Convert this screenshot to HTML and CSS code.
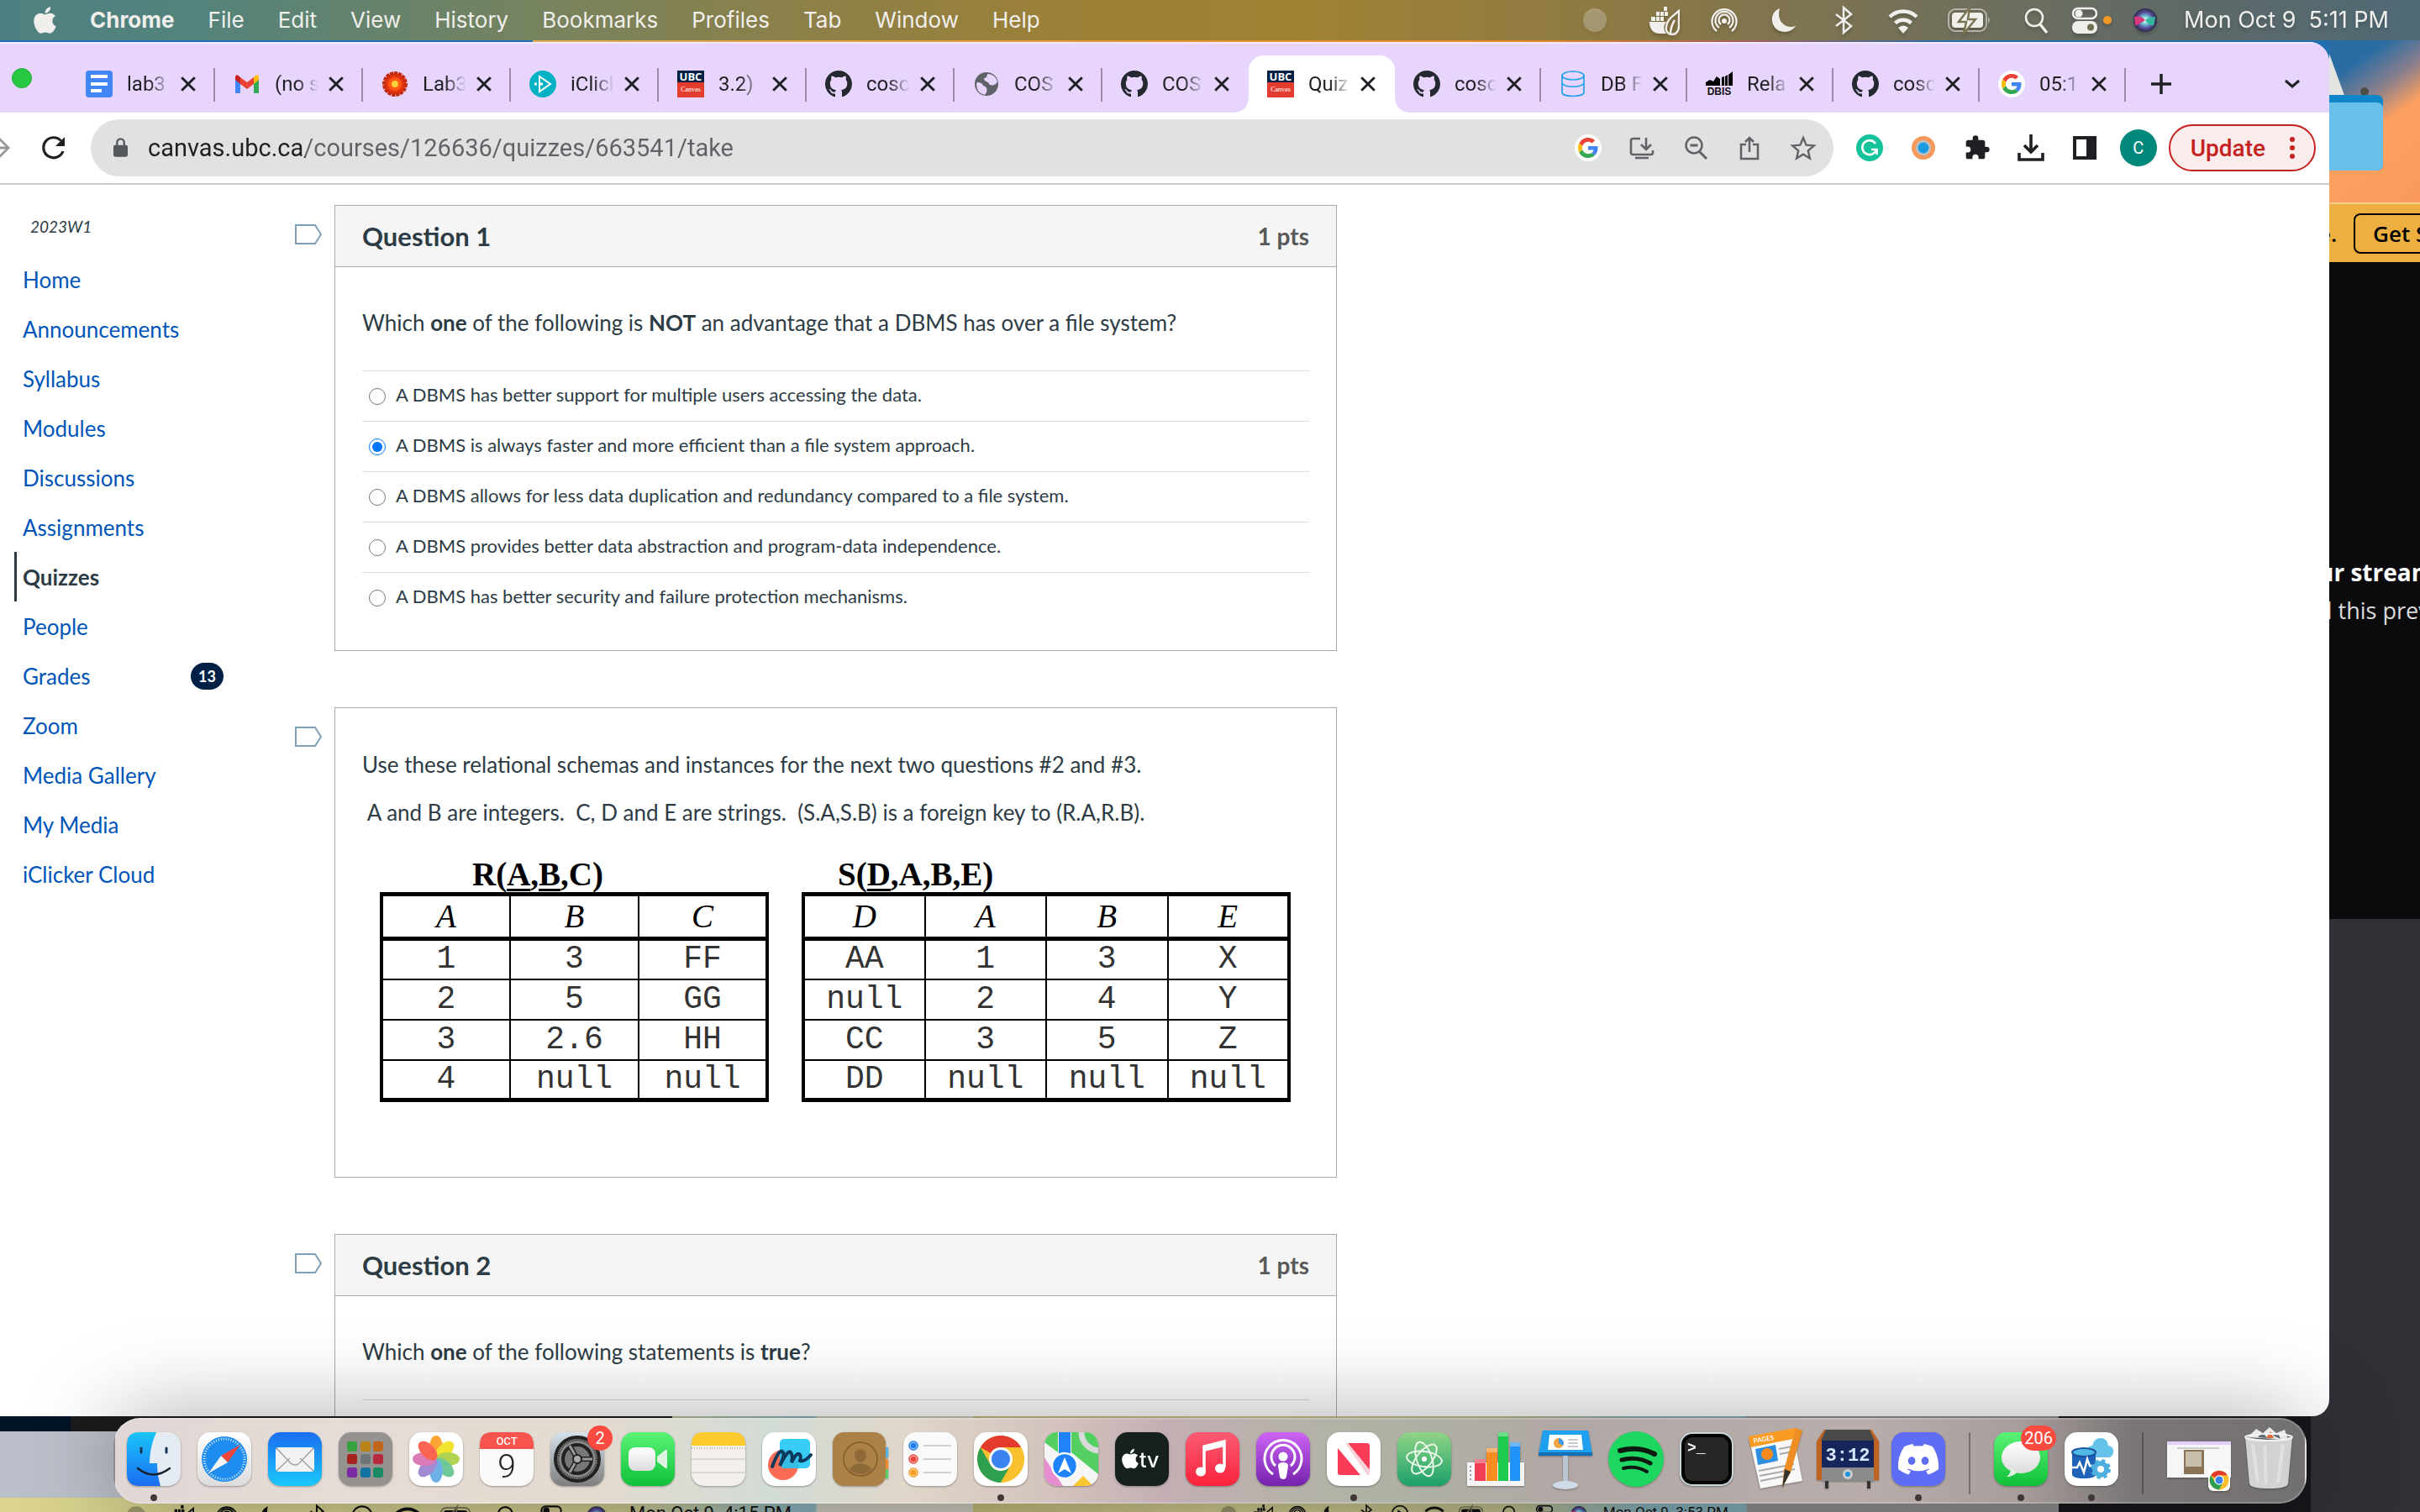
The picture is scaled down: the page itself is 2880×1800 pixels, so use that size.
FILE: index.html
```html
<!DOCTYPE html>
<html lang="en">
<head>
<meta charset="utf-8">
<title>Quiz</title>
<link rel="stylesheet" href="styles.css">
</head>
<body>
<svg class="defs" aria-hidden="true">
  <symbol id="github" viewBox="0 0 16 16"><path fill="#24292f" d="M8 0C3.58 0 0 3.58 0 8c0 3.54 2.29 6.53 5.47 7.59.4.07.55-.17.55-.38 0-.19-.01-.82-.01-1.49-2.01.37-2.53-.49-2.69-.94-.09-.23-.48-.94-.82-1.13-.28-.15-.68-.52-.01-.53.63-.01 1.08.58 1.23.82.72 1.21 1.87.87 2.33.66.07-.52.28-.87.51-1.07-1.78-.2-3.64-.89-3.64-3.95 0-.87.31-1.59.82-2.15-.08-.2-.36-1.02.08-2.12 0 0 .67-.21 2.2.82.64-.18 1.32-.27 2-.27.68 0 1.36.09 2 .27 1.53-1.04 2.2-.82 2.2-.82.44 1.1.16 1.92.08 2.12.51.56.82 1.27.82 2.15 0 3.07-1.87 3.75-3.65 3.95.29.25.54.73.54 1.48 0 1.07-.01 1.93-.01 2.2 0 .21.15.46.55.38A8.013 8.013 0 0016 8c0-4.42-3.58-8-8-8z"/></symbol>
  <symbol id="google" viewBox="0 0 64 64"><circle cx="32" cy="32" r="32" fill="#fff"/><g transform="translate(8 8)"><path fill="#ea4335" d="M24 9.5c3.54 0 6.71 1.22 9.21 3.6l6.85-6.85C35.9 2.38 30.47 0 24 0 14.62 0 6.51 5.38 2.56 13.22l7.98 6.19C12.43 13.72 17.74 9.5 24 9.5z"/><path fill="#4285f4" d="M46.98 24.55c0-1.57-.15-3.09-.38-4.55H24v9.02h12.94c-.58 2.96-2.26 5.48-4.78 7.18l7.73 6c4.51-4.18 7.09-10.36 7.09-17.65z"/><path fill="#fbbc05" d="M10.53 28.59c-.48-1.45-.76-2.99-.76-4.59s.27-3.14.76-4.59l-7.98-6.19C.92 16.46 0 20.12 0 24c0 3.88.92 7.54 2.56 10.78l7.97-6.19z"/><path fill="#34a853" d="M24 48c6.48 0 11.93-2.13 15.89-5.81l-7.73-6c-2.15 1.45-4.92 2.3-8.16 2.3-6.26 0-11.57-4.22-13.47-9.91l-7.98 6.19C6.51 42.62 14.62 48 24 48z"/></g></symbol>
  <symbol id="apple" viewBox="0 0 384 512"><path fill="currentColor" d="M318.7 268.7c-.2-36.7 16.4-64.4 50-84.8-18.8-26.9-47.2-41.7-84.7-44.6-35.5-2.8-74.3 20.7-88.5 20.7-15 0-49.4-19.7-76.4-19.7C63.3 141.2 4 184.8 4 273.5q0 39.3 14.4 81.2c12.8 36.7 59 126.7 107.2 125.2 25.2-.6 43-17.9 75.8-17.9 31.8 0 48.3 17.9 76.4 17.9 48.6-.7 90.4-82.5 102.6-119.3-65.2-30.7-61.7-90-61.7-91.9zm-56.6-164.2c27.3-32.4 24.8-61.9 24-72.5-24.1 1.4-52 16.4-67.9 34.9-17.5 19.8-27.8 44.3-25.6 71.9 26.1 2 49.9-11.4 69.5-34.3z"/></symbol>
  <symbol id="ubc" viewBox="0 0 32 32"><path fill="#002145" d="M0 0h32v14H0z"/><path fill="#e43d2f" d="M0 14h32v18H0z"/><text x="16" y="12" text-anchor="middle" font-family="Open Sans, sans-serif" font-weight="700" font-size="13" fill="#fff">UBC</text><text x="16" y="25" text-anchor="middle" font-family="Liberation Serif, serif" font-size="8" fill="#fff">Canvas</text></symbol>
  <symbol id="close" viewBox="0 0 18 18"><path d="M2 2l14 14M16 2L2 16" stroke="#1f2024" stroke-width="2.600" fill="none"/></symbol>
  <symbol id="flag" viewBox="0 0 32 26"><path d="M1 2h23l7 11-7 11H1z" fill="#fff" stroke="#7ba0b8" stroke-width="2"/></symbol>
  <symbol id="circle" viewBox="0 0 36 36"><circle cx="18" cy="18" r="14" fill="currentColor" opacity=".28"/></symbol>
  <symbol id="docker" viewBox="0 0 36 36"><path fill="currentColor" d="M0 20h20c-4 5-3 10 0 14H12C4 34 0 28 0 20zM2 14h5v5H2zM8 14h4v5H8zM13 14h4v5h-4zM8 8h4v5H8zM13 8h4v5h-4zM18 8h4v5h-4zM17 2h4v5h-4z"/><path fill="none" stroke="currentColor" stroke-width="2.4" d="M35 7v18c0 7-4 10-8 10-5 0-8-4-7-9 1-9 7-12 15-19zM25 35c0-7 1-11 5-17"/></symbol>
  <symbol id="airdrop" viewBox="0 0 36 36"><g fill="none" stroke="currentColor" stroke-width="2.3"><path d="M9 31a14.500 14.500 0 1 1 18 0M12 27a10.500 10.500 0 1 1 12 0M14 23a6.500 6.500 0 1 1 8 0"/></g><circle cx="18" cy="19" r="3" fill="currentColor"/></symbol>
  <symbol id="moon" viewBox="0 0 36 36"><path fill="currentColor" d="M13 4C5 7 2 15 5 23c5 11 20 12 27 2-13 4-23-6-19-21z"/></symbol>
  <symbol id="bluetooth" viewBox="0 0 36 36"><path fill="none" stroke="currentColor" stroke-width="2.500" d="M9 11l18 14-9 8V3l9 8L9 25"/></symbol>
  <symbol id="wifi" viewBox="0 0 36 36"><path fill="none" stroke="currentColor" stroke-width="4.500" d="M2 14a23 23 0 0 1 32 0M8.500 21.500a14 14 0 0 1 19 0"/><path fill="currentColor" d="M12 27q6-5 12 0l-6 7z"/></symbol>
  <symbol id="battery" viewBox="0 0 52 36"><rect x="1" y="5" width="45" height="26" rx="8" fill="none" stroke="currentColor" stroke-width="2" opacity=".55"/><path fill="currentColor" d="M48 14q4 4 0 8z" opacity=".55"/><rect x="5" y="9" width="37" height="18" rx="4" fill="currentColor"/><path d="M26 3L13 20h9l-3 14 14-17h-9z" fill="currentColor" stroke="#7b7452" stroke-width="2.500"/></symbol>
  <symbol id="search" viewBox="0 0 36 36"><circle cx="16" cy="15" r="10" fill="none" stroke="currentColor" stroke-width="2.600"/><path d="M23 23l8 10" stroke="currentColor" stroke-width="3.500"/></symbol>
  <symbol id="control" viewBox="0 0 36 36"><rect x="4" y="4" width="28" height="12" rx="6" fill="none" stroke="currentColor" stroke-width="2.500"/><circle cx="11" cy="10" r="4.500" fill="currentColor"/><rect x="3" y="19" width="30" height="15" rx="7" fill="currentColor"/><circle cx="25" cy="26.500" r="4" fill="#6f6c58"/></symbol>
  <symbol id="play" viewBox="0 0 36 36"><circle cx="18" cy="18" r="14" fill="none" stroke="currentColor" stroke-width="2.500"/><path d="M14 11l11 7-11 7z" fill="currentColor"/></symbol>
  <radialGradient id="siriGrad"><stop offset="0" stop-color="#fff"/><stop offset=".35" stop-color="#6fc4d8"/><stop offset=".7" stop-color="#5a4a9a"/><stop offset="1" stop-color="#2b2b45"/></radialGradient>
  <symbol id="siri" viewBox="0 0 36 36"><circle cx="18" cy="18" r="14" fill="url(#siriGrad)"/><path d="M5 14q8-2 13 4Q9 24 6 24z" fill="#d83a7c"/><path d="M30 14q-6 0-12 4 6 8 10 6z" fill="#35b79e"/></symbol>
  <symbol id="chromelogo" viewBox="0 0 64 64"><circle cx="32" cy="32" r="28" fill="#fbc02d"/><path d="M32 32L7.800 18A28 28 0 0 1 56.200 18z" fill="#e33b2e"/><path d="M7.800 18A28 28 0 0 0 32 60L44 39 20 39z" fill="#2e9e4f"/><path d="M32 18h24.200A28 28 0 0 1 32 60L44 39z" fill="#fbc02d"/><circle cx="32" cy="32" r="14" fill="#fff"/><circle cx="32" cy="32" r="11" fill="#3b83ef"/></symbol>
  <linearGradient id="gBlue" x2="0" y2="1"><stop stop-color="#1b6df0"/><stop offset="1" stop-color="#1ac8fb"/></linearGradient>
  <linearGradient id="gBlue2" x2="0" y2="1"><stop stop-color="#19c5f8"/><stop offset="1" stop-color="#1a6df2"/></linearGradient>
  <linearGradient id="gGreen" x2="0" y2="1"><stop stop-color="#5bf377"/><stop offset="1" stop-color="#10c038"/></linearGradient>
  <linearGradient id="gWhite" x2="0" y2="1"><stop stop-color="#fff"/><stop offset="1" stop-color="#dcdcdc"/></linearGradient>
  <linearGradient id="gRed" x2="0" y2="1"><stop stop-color="#fb5c74"/><stop offset="1" stop-color="#fa233b"/></linearGradient>
  <linearGradient id="gPurple" x2="0" y2="1"><stop stop-color="#ce64f5"/><stop offset="1" stop-color="#7422ad"/></linearGradient>
  <linearGradient id="gAtom" x2="0" y2="1"><stop stop-color="#92d488"/><stop offset="1" stop-color="#1aa06a"/></linearGradient>
  <linearGradient id="gGray" x2="0" y2="1"><stop stop-color="#d5e2ea"/><stop offset="1" stop-color="#7e7e7e"/></linearGradient>
</svg>

<div class="desktop">
  <div class="wallpaper" aria-hidden="true">
    <svg class="folder" viewBox="0 0 70 180"><path d="M0 12l20 55H0z" fill="#e4e4e0"/><circle cx="42" cy="57" r="5" fill="#4d4d48"/><path d="M0 61h56q8 0 8 8v74q0 8-8 8H0z" fill="#0f86c9"/><path d="M0 70h56q8 0 8 8v65q0 8-8 8H0z" fill="#67bfea"/></svg>
  </div>
  <div class="stream">
    <div class="stream-bar"><span>e.</span><button type="button">Get S</button></div>
    <div class="stream-body"><strong>ur stream</strong><span>d this prev</span></div>
  </div>
  <div class="preview preview-left">
    <div class="mini-bar">
      <svg><use href="#circle"/></svg><svg><use href="#docker"/></svg><svg><use href="#airdrop"/></svg><svg><use href="#moon"/></svg><svg><use href="#bluetooth"/></svg><svg><use href="#play"/></svg><svg><use href="#wifi"/></svg><svg class="wide"><use href="#battery"/></svg><svg><use href="#search"/></svg><svg><use href="#control"/></svg><svg><use href="#siri"/></svg><span>Mon Oct 9&nbsp; 4:15 PM</span>
    </div>
  </div>
  <div class="preview preview-right">
    <div class="mini-bar small">
      <svg><use href="#circle"/></svg><svg><use href="#docker"/></svg><svg><use href="#airdrop"/></svg><svg><use href="#moon"/></svg><svg><use href="#bluetooth"/></svg><svg><use href="#play"/></svg><svg><use href="#wifi"/></svg><svg class="wide"><use href="#battery"/></svg><svg><use href="#search"/></svg><svg><use href="#control"/></svg><svg><use href="#siri"/></svg><span>Mon Oct 9&nbsp; 3:53 PM</span>
    </div>
  </div>

  <header class="menubar">
    <nav class="menus">
      <svg class="apple"><use href="#apple"/></svg>
      <button type="button"><b>Chrome</b></button><button type="button">File</button><button type="button">Edit</button><button type="button">View</button><button type="button">History</button><button type="button">Bookmarks</button><button type="button">Profiles</button><button type="button">Tab</button><button type="button">Window</button><button type="button">Help</button>
    </nav>
    <div class="status">
      <svg class="idle"><use href="#circle"/></svg><svg><use href="#docker"/></svg><svg><use href="#airdrop"/></svg><svg><use href="#moon"/></svg><svg><use href="#bluetooth"/></svg><svg><use href="#wifi"/></svg><svg class="wide"><use href="#battery"/></svg><svg><use href="#search"/></svg><span class="cc"><svg><use href="#control"/></svg><i></i></span><svg><use href="#siri"/></svg>
      <time>Mon Oct 9&nbsp; 5:11 PM</time>
    </div>
  </header>

  <main class="window">
    <div class="tabs">
      <span class="zoom-light"></span>
      <div class="tab"><svg class="fav" viewBox="0 0 32 32"><rect width="32" height="32" rx="4" fill="#4285f4"/><path d="M6 7h20M6 16h20M6 24h13" stroke="#fff" stroke-width="4"/></svg><span>lab3</span><button type="button" aria-label="Close"><svg><use href="#close"/></svg></button></div>
      <div class="tab"><svg class="fav" viewBox="0 0 32 32"><path d="M2 27V10l6 4v13z" fill="#4285f4"/><path d="M30 27V10l-6 4v13z" fill="#34a853"/><path d="M24 8l3-2.500Q30 4 30 9v2l-6 5z" fill="#fbbc04"/><path d="M8 8L5 5.500Q2 4 2 9v2l6 5z" fill="#c5221f"/><path d="M8 8l8 6 8-6v8l-8 6-8-6z" fill="#ea4335"/></svg><span>(no s</span><button type="button" aria-label="Close"><svg><use href="#close"/></svg></button></div>
      <div class="tab"><svg class="fav" viewBox="0 0 32 32"><circle cx="16" cy="16" r="13" fill="#e3340f" stroke="#c22a10" stroke-width="4" stroke-dasharray="4 1"/><circle cx="16" cy="16" r="8" fill="#ff5a14"/><circle cx="16" cy="16" r="4" fill="#ffd23a"/></svg><span>Lab3</span><button type="button" aria-label="Close"><svg><use href="#close"/></svg></button></div>
      <div class="tab"><svg class="fav" viewBox="0 0 32 32"><circle cx="16" cy="16" r="16" fill="#06b1c4"/><path d="M12 7l13 9-13 9z" fill="none" stroke="#fff" stroke-width="2"/><path d="M6 16h3M12 16h4" stroke="#fff" stroke-width="3"/></svg><span>iClick</span><button type="button" aria-label="Close"><svg><use href="#close"/></svg></button></div>
      <div class="tab"><svg class="fav"><use href="#ubc"/></svg><span>3.2) </span><button type="button" aria-label="Close"><svg><use href="#close"/></svg></button></div>
      <div class="tab"><svg class="fav"><use href="#github"/></svg><span>cosc</span><button type="button" aria-label="Close"><svg><use href="#close"/></svg></button></div>
      <div class="tab"><svg class="fav" viewBox="0 0 32 32"><circle cx="16" cy="16" r="14" fill="#5f6368"/><path d="M5 14q6 0 7 4 6 1 4 8l-2 3Q4 27 4 16zM17 4q0 5-4 5 0 4 5 5 2 5 7 3 3-1 4-4-3-9-12-9z" fill="#e8d5fe"/></svg><span>COS</span><button type="button" aria-label="Close"><svg><use href="#close"/></svg></button></div>
      <div class="tab before"><svg class="fav"><use href="#github"/></svg><span>COS</span><button type="button" aria-label="Close"><svg><use href="#close"/></svg></button></div>
      <div class="tab active"><svg class="fav"><use href="#ubc"/></svg><span>Quiz</span><button type="button" aria-label="Close"><svg><use href="#close"/></svg></button></div>
      <div class="tab"><svg class="fav"><use href="#github"/></svg><span>cosc</span><button type="button" aria-label="Close"><svg><use href="#close"/></svg></button></div>
      <div class="tab"><svg class="fav" viewBox="0 0 32 32"><g fill="none" stroke="#1fa2ea" stroke-width="1.700"><ellipse cx="16" cy="6" rx="13" ry="5"/><path d="M3 6v20c0 6 26 6 26 0V6M3 14c0 7 26 7 26 0"/></g></svg><span>DB F</span><button type="button" aria-label="Close"><svg><use href="#close"/></svg></button></div>
      <div class="tab"><svg class="fav" viewBox="0 0 32 32"><path d="M0 18v-4l5-3 4 2 4-6 4 3v8zM19 18V8l3-1v11zM23 18V7l3-2v13zM27 18V5l5-4v17z" fill="#000"/><text x="16" y="29" text-anchor="middle" font-family="Liberation Sans, sans-serif" font-weight="700" font-size="12" fill="#111">DBIS</text></svg><span>Rela</span><button type="button" aria-label="Close"><svg><use href="#close"/></svg></button></div>
      <div class="tab"><svg class="fav"><use href="#github"/></svg><span>cosc</span><button type="button" aria-label="Close"><svg><use href="#close"/></svg></button></div>
      <div class="tab"><svg class="fav"><use href="#google"/></svg><span>05:1</span><button type="button" aria-label="Close"><svg><use href="#close"/></svg></button></div>
      <button class="new-tab" type="button" aria-label="New tab"><svg viewBox="0 0 24 24"><path d="M12 0v24M0 12h24" stroke="#1f2024" stroke-width="3.500"/></svg></button>
      <button class="tab-search" type="button" aria-label="Search tabs"><svg viewBox="0 0 24 24"><path d="M4 8l8 7 8-7" fill="none" stroke="#1f2024" stroke-width="3"/></svg></button>
    </div>

    <div class="toolbar">
      <button type="button" class="forward" aria-label="Forward"><svg viewBox="0 0 28 28"><path d="M0 14h24M13 2l12 12-12 12" fill="none" stroke="#9a9a9a" stroke-width="3"/></svg></button>
      <button type="button" class="reload" aria-label="Reload"><svg viewBox="0 0 28 28"><path d="M25 18A12 12 0 1 1 22.500 5.500" fill="none" stroke="#1f2024" stroke-width="3.200"/><path d="M27 1v11H16z" fill="#1f2024"/></svg></button>
      <form class="omnibox">
        <svg class="lock" viewBox="0 0 16 22"><rect y="8" width="16" height="13" rx="2" fill="#55585c"/><path d="M4 9V5a4 4 0 0 1 8 0v4" fill="none" stroke="#55585c" stroke-width="2.200"/></svg>
        <input type="text" aria-label="Address" value="canvas.ubc.ca/courses/126636/quizzes/663541/take">
        <svg><use href="#google"/></svg>
        <svg viewBox="0 0 32 32"><path d="M14 5H5.500Q3 5 3 7.500v14Q3 24 5.500 24h21q2.500 0 2.500-2.500V19M8 28h16" fill="none" stroke="#5f6368" stroke-width="2.600"/><path d="M21 4v13M15 12l6 6 6-6" fill="none" stroke="#5f6368" stroke-width="2.600"/></svg>
        <svg viewBox="0 0 32 32"><circle cx="14" cy="13" r="9.500" fill="none" stroke="#5f6368" stroke-width="2.500"/><path d="M9.500 13h9M20 20l9 9" stroke="#5f6368" stroke-width="3"/></svg>
        <svg viewBox="0 0 32 32"><path d="M12 12H6v17h20V12h-6M16 21V4M11 9l5-5 5 5" fill="none" stroke="#5f6368" stroke-width="2.500"/></svg>
        <svg viewBox="0 0 32 32"><path d="M16 4l3.600 8.600 9.200.8-7 6 2.100 9.100L16 23.700l-7.900 4.800 2.100-9.100-7-6 9.200-.8z" fill="none" stroke="#5f6368" stroke-width="2.400"/></svg>
      </form>
      <div class="extensions">
        <svg viewBox="0 0 32 32"><circle cx="16" cy="16" r="16" fill="#15c39a"/><path d="M23 11a8.500 8.500 0 1 0 1 7h-6M24.500 17v7" fill="none" stroke="#fff" stroke-width="2.600"/></svg>
        <svg viewBox="0 0 32 32"><circle cx="16" cy="16" r="14" fill="#f59a5b"/><circle cx="16" cy="16" r="9" fill="#b9c3cc"/><circle cx="16" cy="16" r="6.500" fill="#1d9be0"/></svg>
        <svg viewBox="0 0 24 24"><path fill="#1f2024" d="M20.500 11H19V7a2 2 0 0 0-2-2h-4V3.500a2.500 2.500 0 0 0-5 0V5H4a2 2 0 0 0-2 2v3.800h1.500a2.700 2.700 0 0 1 0 5.400H2V20a2 2 0 0 0 2 2h3.800v-1.500a2.700 2.700 0 0 1 5.400 0V22H17a2 2 0 0 0 2-2v-4h1.500a2.500 2.500 0 0 0 0-5z"/></svg>
        <svg viewBox="0 0 32 32"><path d="M16 0v21M8 13l8 8 8-8M2 22v8h28v-8" fill="none" stroke="#1f2024" stroke-width="3.600"/></svg>
        <svg viewBox="0 0 32 32"><path fill="#1f2024" fill-rule="evenodd" d="M2 2h28v28H2zM6 6v20h12V6z"/></svg>
        <button type="button" class="avatar">C</button>
        <button type="button" class="update">Update<svg viewBox="0 0 8 28"><circle cx="4" cy="4" r="3"/><circle cx="4" cy="14" r="3"/><circle cx="4" cy="24" r="3"/></svg></button>
      </div>
    </div>

    <div class="page">
      <aside class="sidebar">
        <p class="term">2023W1</p>
        <nav>
          <a href="#">Home</a><a href="#">Announcements</a><a href="#">Syllabus</a><a href="#">Modules</a><a href="#">Discussions</a><a href="#">Assignments</a><a href="#" class="current">Quizzes</a><a href="#">People</a><a href="#">Grades<span class="badge">13</span></a><a href="#">Zoom</a><a href="#">Media Gallery</a><a href="#">My Media</a><a href="#">iClicker Cloud</a>
        </nav>
      </aside>
      <div class="questions">
        <section class="row">
          <svg class="flag"><use href="#flag"/></svg>
          <div class="card">
            <div class="card-head"><h2>Question 1</h2><span>1 pts</span></div>
            <div class="card-body">
              <p>Which <b>one</b> of the following is <b>NOT</b> an advantage that a DBMS has over a file system?</p>
              <div class="answers">
                <label><input type="radio" name="q1">A DBMS has better support for multiple users accessing the data.</label>
                <label><input type="radio" name="q1" checked>A DBMS is always faster and more efficient than a file system approach.</label>
                <label><input type="radio" name="q1">A DBMS allows for less data duplication and redundancy compared to a file system.</label>
                <label><input type="radio" name="q1">A DBMS provides better data abstraction and program-data independence.</label>
                <label><input type="radio" name="q1">A DBMS has better security and failure protection mechanisms.</label>
              </div>
            </div>
          </div>
        </section>
        <section class="row">
          <svg class="flag"><use href="#flag"/></svg>
          <div class="card">
            <div class="card-body text">
              <p>Use these relational schemas and instances for the next two questions #2 and #3.</p>
              <p>&nbsp;A and B are integers.&nbsp; C, D and E are strings.&nbsp; (S.A,S.B) is a foreign key to (R.A,R.B).</p>
              <div class="relations">
                <table class="rel-r">
                  <caption>R(<u>A</u>,<u>B</u>,C)</caption>
                  <thead><tr><th>A</th><th>B</th><th>C</th></tr></thead>
                  <tbody><tr><td>1</td><td>3</td><td>FF</td></tr><tr><td>2</td><td>5</td><td>GG</td></tr><tr><td>3</td><td>2.6</td><td>HH</td></tr><tr><td>4</td><td>null</td><td>null</td></tr></tbody>
                </table>
                <table class="rel-s">
                  <caption>S(<u>D</u>,A,B,E)</caption>
                  <thead><tr><th>D</th><th>A</th><th>B</th><th>E</th></tr></thead>
                  <tbody><tr><td>AA</td><td>1</td><td>3</td><td>X</td></tr><tr><td>null</td><td>2</td><td>4</td><td>Y</td></tr><tr><td>CC</td><td>3</td><td>5</td><td>Z</td></tr><tr><td>DD</td><td>null</td><td>null</td><td>null</td></tr></tbody>
                </table>
              </div>
            </div>
          </div>
        </section>
        <section class="row">
          <svg class="flag"><use href="#flag"/></svg>
          <div class="card">
            <div class="card-head"><h2>Question 2</h2><span>1 pts</span></div>
            <div class="card-body">
              <p>Which <b>one</b> of the following statements is <b>true</b>?</p>
              <div class="answers"><label></label></div>
            </div>
          </div>
        </section>
      </div>
    </div>
  </main>

  <footer class="dock">
    <div class="app running"><svg viewBox="0 0 64 64"><rect width="64" height="64" rx="15" fill="#e4ebf3"/><path d="M15 0h20q-8 18-8 37h9q0 14 4 27H15Q0 64 0 49V15Q0 0 15 0z" fill="url(#gBlue2)"/><path d="M17 19v5M47 19v5" stroke="#17324f" stroke-width="3" stroke-linecap="round"/><path d="M13 43q18 15 38 0" fill="none" stroke="#17212f" stroke-width="2.500" stroke-linecap="round"/></svg></div>
    <div class="app"><svg viewBox="0 0 64 64"><rect width="64" height="64" rx="15" fill="url(#gWhite)"/><circle cx="32" cy="32" r="27" fill="#1f8cf0"/><circle cx="32" cy="32" r="24" fill="none" stroke="#d8ecfb" stroke-width="3" stroke-dasharray="1 2"/><path d="M51 15L36 36l-8-8z" fill="#f0453a"/><path d="M13 49l15-21 8 8z" fill="#f4f4f4"/></svg></div>
    <div class="app"><svg viewBox="0 0 64 64"><rect width="64" height="64" rx="15" fill="url(#gBlue)"/><rect x="9" y="18" width="46" height="29" rx="4" fill="#f2f2f2"/><path d="M10 46l16-15M54 46L38 31M10 19l17 18q5 4 10 0l17-18" fill="none" stroke="#a3a3a3" stroke-width="1.500"/></svg></div>
    <div class="app"><svg viewBox="0 0 64 64"><rect width="64" height="64" rx="15" fill="#969290"/><g><rect x="10" y="11" width="12" height="12" rx="3" fill="#36a23d"/><rect x="26" y="11" width="12" height="12" rx="3" fill="#b88416"/><rect x="41" y="11" width="12" height="12" rx="3" fill="#c2671a"/><rect x="10" y="26" width="12" height="12" rx="3" fill="#a5241f"/><rect x="26" y="26" width="12" height="12" rx="3" fill="#6d7577"/><rect x="41" y="26" width="12" height="12" rx="3" fill="#b7293e"/><rect x="10" y="42" width="12" height="12" rx="3" fill="#7a2ba1"/><rect x="26" y="42" width="12" height="12" rx="3" fill="#1473a3"/><rect x="41" y="42" width="12" height="12" rx="3" fill="#1a8a63"/></g></svg></div>
    <div class="app"><svg viewBox="0 0 64 64"><rect width="64" height="64" rx="15" fill="#fff"/><g opacity=".9"><ellipse cx="32" cy="18" rx="8" ry="14" fill="#fb9d1c"/><ellipse cx="32" cy="18" rx="8" ry="14" fill="#f2e01b" transform="rotate(45 32 32)"/><ellipse cx="32" cy="18" rx="8" ry="14" fill="#a8cf3f" transform="rotate(90 32 32)"/><ellipse cx="32" cy="18" rx="8" ry="14" fill="#5fc48c" transform="rotate(135 32 32)"/><ellipse cx="32" cy="18" rx="8" ry="14" fill="#5fa8e6" transform="rotate(180 32 32)"/><ellipse cx="32" cy="18" rx="8" ry="14" fill="#9a7fd0" transform="rotate(225 32 32)"/><ellipse cx="32" cy="18" rx="8" ry="14" fill="#d86db0" transform="rotate(270 32 32)"/><ellipse cx="32" cy="18" rx="8" ry="14" fill="#fb5340" transform="rotate(315 32 32)"/></g></svg></div>
    <div class="app"><svg viewBox="0 0 64 64"><rect width="64" height="64" rx="15" fill="#fbfaf8"/><path d="M0 20v-5Q0 0 15 0h34q15 0 15 15v5z" fill="#f6544c"/><text x="32" y="15" text-anchor="middle" font-family="Roboto, sans-serif" font-weight="500" font-size="13" fill="#fff">OCT</text><text x="32" y="54" text-anchor="middle" font-family="Roboto, sans-serif" font-weight="300" font-size="39" fill="#222">9</text></svg></div>
    <div class="app"><svg viewBox="0 0 64 64"><rect width="64" height="64" rx="15" fill="url(#gGray)"/><circle cx="32" cy="32" r="26" fill="#9b9b9b" stroke="#222" stroke-width="4"/><circle cx="32" cy="32" r="23" fill="#8a8a8a" stroke="#333" stroke-width="3" stroke-dasharray="1 1"/><circle cx="32" cy="32" r="17" fill="#777" stroke="#222" stroke-width="4"/><path d="M32 32h18M32 32l-9-16M32 32l-9 16" stroke="#222" stroke-width="6"/><path d="M32 32h18M32 32l-9-16M32 32l-9 16" stroke="#999" stroke-width="3"/><circle cx="32" cy="32" r="5" fill="#aaa" stroke="#222" stroke-width="2"/></svg><span class="count">2</span></div>
    <div class="app"><svg viewBox="0 0 64 64"><rect width="64" height="64" rx="15" fill="url(#gGreen)"/><rect x="9" y="18" width="32" height="28" rx="8" fill="url(#gWhite)"/><path d="M43 29l10-8q2-1 2 2v18q0 3-2 2l-10-8z" fill="#dff3e2"/></svg></div>
    <div class="app"><svg viewBox="0 0 64 64"><rect width="64" height="64" rx="15" fill="#f3f0ec"/><path d="M0 16v-1Q0 0 15 0h34q15 0 15 15v1z" fill="#fdcb2e"/><path d="M0 19h64" stroke="#aaa" stroke-width="1.500" stroke-dasharray="1 2"/><path d="M0 32h64M0 48h64" stroke="#cfcfcf" stroke-width="1.500"/></svg></div>
    <div class="app"><svg viewBox="0 0 64 64"><rect width="64" height="64" rx="15" fill="#fff"/><circle cx="25" cy="39" r="18" fill="#fb6b55"/><rect x="21" y="8" width="36" height="35" rx="5" fill="#22c8f5" opacity=".9"/><path d="M12 41Q20 20 24 23T21 40Q31 20 34 24T35 36Q41 24 44 26T45 34Q50 36 58 27" fill="none" stroke="#0b3a5c" stroke-width="4" stroke-linecap="round"/></svg></div>
    <div class="app"><svg viewBox="0 0 64 64"><path d="M58 18h8v12h-8z" fill="#4fb2e8"/><path d="M58 32h8v12h-8z" fill="#f08a2a"/><path d="M58 44h8v11h-8z" fill="#5bd06a"/><rect width="63" height="64" rx="14" fill="#ab8148"/><circle cx="33" cy="32" r="20" fill="none" stroke="#7d5c2d" stroke-width="1.500"/><ellipse cx="33" cy="28" rx="7" ry="8" fill="#8d6a38"/><path d="M19 44q14-14 28 0-14 12-28 0z" fill="#8d6a38"/></svg></div>
    <div class="app"><svg viewBox="0 0 64 64"><rect width="64" height="64" rx="15" fill="#fbfafa"/><g fill="none" stroke-width="1.500"><circle cx="12" cy="16" r="5" stroke="#1a7cf5"/><circle cx="12" cy="32" r="5" stroke="#f5433a"/><circle cx="12" cy="48" r="5" stroke="#fb9a1c"/></g><circle cx="12" cy="16" r="3.500" fill="#1a7cf5"/><circle cx="12" cy="32" r="3.500" fill="#f5433a"/><circle cx="12" cy="48" r="3.500" fill="#fb9a1c"/><path d="M24 16h33M24 32h33M24 48h33" stroke="#c4c4c6" stroke-width="1.500"/></svg></div>
    <div class="app running"><svg viewBox="0 0 64 64"><rect width="64" height="64" rx="15" fill="#fff"/><use href="#chromelogo"/></svg></div>
    <div class="app"><svg viewBox="0 0 64 64"><clipPath id="mapClip"><rect width="64" height="64" rx="15"/></clipPath><g clip-path="url(#mapClip)"><path fill="#f5f5f5" d="M0 0h64v64H0z"/><path d="M32 0h32v50L32 24z" fill="#54cf62"/><path d="M0 12V0h16v24z" fill="#54cf62"/><path d="M0 30l22 34H0z" fill="#e88ed0"/><path d="M34 64l12-12 12 12z" fill="#fcc62e"/><path d="M17 0h14v32H17z" fill="#1f84fb"/><circle cx="66" cy="0" r="22" fill="none" stroke="#dadada" stroke-width="7"/></g><circle cx="24" cy="40" r="15" fill="#1f84fb" stroke="#fff" stroke-width="2.500"/><path d="M24 30l8 19-8-5-8 5z" fill="#fff"/></svg></div>
    <div class="app tv"><svg viewBox="0 0 64 64"><rect width="64" height="64" rx="15" fill="#16201f"/><svg x="8" y="18" width="20" height="27" color="#fff"><use href="#apple"/></svg><text x="29" y="42" font-family="Inter, sans-serif" font-weight="500" font-size="25" fill="#fff">tv</text></svg></div>
    <div class="app"><svg viewBox="0 0 64 64"><rect width="64" height="64" rx="15" fill="url(#gRed)"/><path d="M22 46V17l24-6v31" fill="none" stroke="#fff" stroke-width="3.500"/><path d="M22 16l24-6v7l-24 6z" fill="#fff"/><ellipse cx="18" cy="47" rx="6" ry="5.500" fill="#fff"/><ellipse cx="41" cy="43" rx="6" ry="5.500" fill="#fff"/></svg></div>
    <div class="app"><svg viewBox="0 0 64 64"><rect width="64" height="64" rx="15" fill="url(#gPurple)"/><g fill="none" stroke="#fff" stroke-width="3"><path d="M20 50a22 22 0 1 1 24 0M23 40a14 14 0 1 1 18 0"/></g><circle cx="32" cy="29" r="5.500" fill="#fff"/><path d="M26 40q0-4 6-4t6 4l-2 13q-1 3-4 3t-4-3z" fill="#fff"/></svg></div>
    <div class="app running"><svg viewBox="0 0 64 64"><rect width="64" height="64" rx="15" fill="#fff"/><rect x="13" y="13" width="38" height="38" rx="3" fill="#fa3c58"/><path d="M13 13h12l26 32v6H40L13 19z" fill="#fff"/><path d="M22 13h3l26 32v6h-3z" fill="#fbd2d8"/></svg></div>
    <div class="app"><svg viewBox="0 0 64 64"><rect width="64" height="64" rx="15" fill="url(#gAtom)"/><g fill="none" stroke="#e9f7e8" stroke-width="2"><ellipse cx="32" cy="32" rx="9" ry="21" transform="rotate(-18 32 32)"/><ellipse cx="32" cy="32" rx="9" ry="21" transform="rotate(38 32 32)"/><ellipse cx="32" cy="32" rx="9" ry="21" transform="rotate(98 32 32)"/></g><circle cx="32" cy="32" r="3" fill="#fff"/></svg></div>
    <div class="app"><svg viewBox="0 0 64 64"><path d="M-1 36h68v28H-1z" fill="#f6f6f6"/><rect x="8" y="32" width="13" height="26" fill="#f03e55"/><rect x="22" y="19" width="13" height="39" fill="#fb8d22"/><rect x="36" y="0" width="12" height="58" fill="#1ecb4c"/><rect x="50" y="12" width="12" height="46" fill="#1f93f8"/><path d="M8 32h13v5H8zM22 19h13v5H22zM36 0h12v5H36zM50 12h12v5H50z" fill="#fff" opacity=".35"/><path d="M3 40v20" stroke="#999" stroke-width="2" stroke-dasharray="2 3"/></svg></div>
    <div class="app"><svg viewBox="0 0 64 64"><path d="M29 28h6v34h-6z" fill="#b9c6d2"/><ellipse cx="32" cy="63" rx="15" ry="5" fill="#cfdbe6"/><path d="M5-2h54l5 28H0z" fill="#1f9ff0"/><path d="M0 24h64v4H0z" fill="#1470b8"/><path d="M13 3h38l2 18H11z" fill="#fff"/><circle cx="24" cy="13" r="6" fill="#f5a33a"/><path d="M24 13v-6a6 6 0 0 1 5 9z" fill="#3a9cf0"/><path d="M35 9h12M35 13h12M35 17h12" stroke="#bbb" stroke-width="1.500"/></svg></div>
    <div class="app"><svg viewBox="0 0 64 64"><circle cx="32" cy="32" r="33" fill="#1ed760"/><g fill="none" stroke="#0c1a10" stroke-linecap="round"><path d="M13 22q22-6 41 4" stroke-width="6"/><path d="M15 33q18-5 34 4" stroke-width="5"/><path d="M17 43q15-4 28 4" stroke-width="4"/></g></svg></div>
    <div class="app"><svg viewBox="0 0 64 64"><rect width="64" height="64" rx="15" fill="#c9d8de"/><rect x="2" y="2" width="60" height="60" rx="13" fill="#000"/><rect x="6" y="6" width="52" height="52" rx="9" fill="#262626"/><text x="9" y="24" font-family="Liberation Mono, monospace" font-weight="700" font-size="18" fill="#fff">&gt;_</text></svg></div>
    <div class="app"><svg viewBox="0 0 64 64"><path d="M-2 5L50-4l12 62-50 9z" fill="#f8f8f8"/><path d="M-2 5L54-5l2 12L0 18z" fill="#fb9a20"/><text x="4" y="13" transform="rotate(-9 4 13)" font-family="Lato, sans-serif" font-weight="700" font-size="8" fill="#fff">PAGES</text><path d="M6 20l24-5 3 19-24 5z" fill="#2c8fe0"/><circle cx="20" cy="26" r="7" fill="#fb8a1e"/><path d="M34 20l16-3M35 26l16-3M10 46l42-8M11 52l42-8M12 58l30-6" stroke="#aaa" stroke-width="2"/><path d="M62-2L48 48l-10 18 2-21L54-5z" fill="#ee8f26"/><path d="M41 44l7 3-10 19z" fill="#333"/></svg></div>
    <div class="app clock"><svg viewBox="0 0 76 72"><path d="M10 0h56l9 14v46H1V14z" fill="#c0621f"/><path d="M12 0h52l6 13H6z" fill="#4a4a4a"/><path d="M7 13h62v32H7z" fill="#16265a"/><path d="M7 45h62v16H7z" fill="#8b8b8b"/><text x="38" y="37" text-anchor="middle" font-family="Liberation Mono, monospace" font-weight="700" font-size="22" fill="#d8e6ff">3:12</text><circle cx="38" cy="53" r="6" fill="#ccc"/><circle cx="38" cy="53" r="3" fill="#1e90e0"/><path d="M13 61v9M63 61v9" stroke="#333" stroke-width="4"/></svg></div>
    <div class="app running"><svg viewBox="0 0 64 64"><rect width="64" height="64" rx="15" fill="#5f6df4"/><path transform="translate(8 14) scale(.378)" fill="#fff" d="M107.700 8.070A105.150 105.150 0 0 0 81.470 0a72.060 72.060 0 0 0-3.360 6.830A97.680 97.680 0 0 0 49 6.830 72.370 72.370 0 0 0 45.640 0 105.890 105.890 0 0 0 19.390 8.090C2.790 32.650-1.710 56.600.540 80.210A105.730 105.730 0 0 0 32.710 96.360 77.700 77.700 0 0 0 39.600 85.250a68.420 68.420 0 0 1-10.850-5.180c.910-.660 1.800-1.340 2.660-2a75.570 75.570 0 0 0 64.320 0c.870.710 1.760 1.390 2.660 2a68.680 68.680 0 0 1-10.870 5.190 77 77 0 0 0 6.890 11.100A105.250 105.250 0 0 0 126.600 80.220C129.240 52.840 122.090 29.110 107.700 8.070ZM42.450 65.690C36.180 65.690 31 60 31 53s5-12.740 11.430-12.740S54 46 53.890 53 48.840 65.690 42.450 65.690Zm42.240 0C78.410 65.690 73.250 60 73.250 53s5-12.740 11.440-12.740S96.230 46 96.120 53 91.080 65.690 84.690 65.690Z"/></svg></div>
    <i class="sep"></i>
    <div class="app running"><svg viewBox="0 0 64 64"><rect width="64" height="64" rx="15" fill="url(#gGreen)"/><ellipse cx="32" cy="30" rx="23" ry="19" fill="url(#gWhite)"/><path d="M20 43q0 7-5 10 8 0 13-6z" fill="#e2f2e2"/></svg><span class="count">206</span></div>
    <div class="app running"><svg viewBox="0 0 64 64"><rect width="64" height="64" rx="15" fill="#fff"/><path d="M32 30q-6-1-6-7t7-7q2-9 10-9t9 9q7 1 6 8t-8 6z" fill="#65c3ea"/><path d="M9 24v26q0 5 14 5t14-5V24z" fill="#1d63b8"/><ellipse cx="23" cy="24" rx="14" ry="5" fill="#4fb9e6" stroke="#1a4f9c" stroke-width="2"/><path d="M9 42h6l3-6 5 12 4-16 3 8h6" fill="none" stroke="#fff" stroke-width="2.500"/><circle cx="43" cy="44" r="7" fill="none" stroke="#4fb0e0" stroke-width="6"/><circle cx="43" cy="44" r="10" fill="none" stroke="#4fb0e0" stroke-width="4" stroke-dasharray="4 4"/></svg></div>
    <i class="sep"></i>
    <div class="app thumb"><svg viewBox="0 0 76 64"><path d="M0 11h76v43H0z" fill="#f6f6f8"/><path d="M0 11h76v4H0z" fill="#e2cffa"/><path d="M12 19h50" stroke="#ccc" stroke-width="2"/><path d="M20 21h24v29H20z" fill="#8a7455"/><path d="M22 23h19v18H22z" fill="#c7beac"/><rect x="49" y="44" width="26" height="26" rx="6" fill="#fff"/><svg x="49" y="44" width="26" height="26"><use href="#chromelogo"/></svg></svg></div>
    <div class="app trash"><svg viewBox="0 0 58 74"><path d="M4 12L14 2l8 5 8-7 8 7 10-4 4 12z" fill="#e9e9e9"/><path d="M16 12l6-6 5 7zM34 10l6-3 3 7z" fill="#5b6570"/><path d="M26 13l5-8 4 8z" fill="#e06a3a"/><path d="M1 11q28 8 56 0l-5 56q-1 6-23 6T6 67z" fill="#dcdcdc" opacity=".93"/><path d="M10 20l6 46M24 22l2 46M46 20l-6 46" stroke="#e9e9e9" stroke-width="4" opacity=".6"/><ellipse cx="29" cy="12" rx="28" ry="4" fill="none" stroke="#f2f2f2" stroke-width="2"/></svg></div>
  </footer>
</div>
</body>
</html>
```
FILE: styles.css
```css
* { box-sizing: border-box; }
body { margin: 0; font-family: Lato, "Liberation Sans", sans-serif; color: #2d3b45; }
button { border: 0; background: none; padding: 0; font: inherit; color: inherit; display: flex; align-items: center; }
p, h2 { margin: 0; }
svg { display: block; flex: none; overflow: visible; }
.defs { position: absolute; width: 0; height: 0; }

.desktop { position: relative; height: 100vh; overflow: hidden; display: flex; flex-direction: column; background: #17181b; }
.wallpaper { position: absolute; top: 0; left: 0; right: 0; height: 244px; background: linear-gradient(145deg, #2a6ca3 30%, #8a7f8c 46%, #fba060 60%, #fb9a5a) right / 108px 100% no-repeat,
    linear-gradient(90deg, #1d6fb8 0 22%, #e0ad52 22%, #e88a24 63%, #a8605a 72%, #2070b0 81%); }
.folder { position: absolute; right: 38px; top: 52px; width: 70px; height: 180px; }

/* streaming window behind the browser */
.stream { position: absolute; right: 0; top: 241px; bottom: 0; width: 130px; overflow: hidden; background: #2f3136; color: #f2f2f2; font-family: "Open Sans", sans-serif; white-space: nowrap; }
.stream-bar { display: flex; align-items: center; gap: 20px; height: 71px; padding-left: 9px; background: #edb040; color: #000; font-weight: 600; font-size: 26px; border-top: 2px solid #f6d089; }
.stream-bar button { height: 48px; padding: 0 21px; border: 2px solid #000; border-radius: 8px; }
.stream-body { height: 782px; padding: 346px 0 0 9px; background: #0b0b0d; display: flex; flex-direction: column; line-height: 46px; font-size: 27px; color: #dcdcdc; }
.stream-body strong { font-size: 28px; color: #fff; }

/* screens stacked under the browser window */
.preview { position: absolute; bottom: 0; height: 114px; overflow: hidden; display: flex; align-items: flex-end; color: #111; }
.preview-left { left: 0; width: 1158px; background: linear-gradient(#001427 0 18px, transparent 18px) left / 84px 100% no-repeat, linear-gradient(#1b1b1c 0 18px, #babfc9 18px 97px, transparent 97px) left / 800px 100% no-repeat, linear-gradient(90deg, #dad48e 0, #c9c58c 740px, #8bb0b8 950px 971px, #c8c5ba 972px); }
.preview-right { left: 1158px; width: 1292px; background: linear-gradient(90deg, #bdb878 0, #c9c48a 300px, #b9b888 640px, #82abb4 800px 920px, #8f8d90 921px); }
.mini-bar { display: flex; width: 795px; margin-left: 147px; height: 10px; justify-content: space-between; align-items: flex-start; font: 22px/24px Roboto, sans-serif; white-space: nowrap; }
.mini-bar svg { width: 30px; height: 30px; }
.mini-bar svg.wide { width: 40px; }
.mini-bar.small { width: 607px; margin-left: 292px; font-size: 17px; line-height: 20px; }
.mini-bar.small svg { width: 24px; height: 24px; }
.mini-bar.small svg.wide { width: 32px; }

.menubar { position: relative; height: 48px; display: flex; justify-content: space-between; padding: 0 37px 0 40px; color: #f0efec; font: 26px/48px Inter, sans-serif;
  background: linear-gradient(90deg, #4f8081, #53837c 8%, #76835f 22%, #8c8049 33%, #9d8036 45%, #a08234 54%, #8a7846 68%, #73705a 80%, #5d6968 91%, #4f6a76); }
.menus, .status { display: flex; align-items: center; }
.menus { gap: 40px; text-shadow: 0 3px 5px #0004; }
.menus .apple { width: 27px; height: 36px; }
.status { gap: 35px; font-size: 27px; filter: drop-shadow(0 3px 2px #0003); }
.status svg { width: 36px; height: 36px; }
.status svg.idle { margin-right: 12px; }
.status svg.wide { width: 52px; }
.status time { margin-left: -7px; }
.cc { display: flex; align-items: center; gap: 4px; margin: 0 -13px; }
.cc i { width: 10px; height: 10px; border-radius: 50%; background: #f39a24; }

.window { position: relative; flex: 1; margin: 2px 108px 114px 0; min-height: 0; display: flex; flex-direction: column; background: #fff; border-radius: 0 24px 20px 0; overflow: hidden; }
.tabs { display: flex; align-items: flex-end; height: 84px; flex: none; padding-left: 14px; background: #e8d5fe; box-shadow: inset 0 2px #f3e9ff; color: #1f2024; font: 24px/32px Roboto, sans-serif; }
.zoom-light { width: 24px; height: 24px; margin: 0 42px 29px 0; border-radius: 50%; background: #28c840; border: 1px solid #1fae33; }
.tab { position: relative; width: 176px; height: 68px; padding: 0 22px; display: flex; align-items: center; gap: 17px; }
.tab.before, .tab.before ~ .tab { width: 174px; }
.tab::after { content: ""; position: absolute; right: 0; top: 15px; width: 2px; height: 40px; background: #9c8ba8; }
.tab.before::after, .tab.active::after { display: none; }
.tab .fav { width: 32px; height: 32px; }
.tab span { flex: 1; margin-right: -6px; overflow: hidden; white-space: pre; height: 32px; -webkit-mask-image: linear-gradient(90deg, #000 50%, transparent); mask-image: linear-gradient(90deg, #000 50%, transparent); }
.tab button svg { width: 20px; height: 20px; }
.tab.active { background: #fff; border-radius: 18px 18px 0 0; }
.tab.active::before { content: ""; position: absolute; left: -16px; right: -16px; bottom: 0; height: 16px; background: radial-gradient(circle at 0 0, transparent 15px, #fff 16px) left / 16px 16px no-repeat, radial-gradient(circle at 100% 0, transparent 15px, #fff 16px) right / 16px 16px no-repeat; }
.new-tab { margin: 0 0 22px 30px; }
.tab-search { margin: 0 32px 22px auto; }
.new-tab svg, .tab-search svg { width: 24px; height: 24px; }

.toolbar { display: flex; align-items: center; height: 86px; flex: none; border-bottom: 2px solid #cdcdcd; padding-right: 16px; }
.forward { width: 13px; justify-content: flex-end; }
.reload { margin: 0 30px 0 37px; }
.forward svg, .reload svg { width: 28px; height: 28px; }
.omnibox { flex: 1; display: flex; align-items: center; gap: 32px; height: 68px; padding: 0 20px 0 27px; border-radius: 34px; background: #e1e1e1; }
.omnibox svg { width: 32px; height: 32px; }
.omnibox .lock { width: 17px; height: 24px; }
.omnibox input { flex: 1; min-width: 0; margin-left: -8px; padding: 0; border: 0; font: 29px/40px Roboto, sans-serif; color: transparent; background: linear-gradient(90deg, #1f2024 187px, #5f6368 187px); -webkit-background-clip: text; background-clip: text; }
.extensions { display: flex; align-items: center; gap: 32px; padding-left: 27px; }
.extensions svg { width: 32px; height: 32px; }
.avatar { width: 44px; height: 44px; margin: 0 -18px 0 -6px; border-radius: 50%; justify-content: center; background: #00897b; color: #fff; font: 20px Roboto, sans-serif; }
.update { height: 56px; padding: 0 22px 0 24px; gap: 28px; border: 2px solid #c5221f; border-radius: 28px; background: #faeceb; color: #c5221f; font: 500 28px Roboto, sans-serif; }
.update svg { width: 8px; height: 28px; fill: #c5221f; }

.page { flex: 1; min-height: 0; overflow: hidden; display: flex; }
.sidebar { width: 351px; flex: none; padding: 36px 0 0 17px; font-size: 26px; }
.term { padding-left: 19px; margin-bottom: 19px; font: italic 19px/28px Lato, sans-serif; }
.sidebar a { display: flex; align-items: center; justify-content: space-between; width: 249px; height: 59px; padding-left: 7px; border-left: 3px solid transparent; color: #0055b8; text-decoration: none; }
.sidebar a.current { color: #2d3b45; font-weight: 700; border-color: #2d3b45; }
.badge { width: 39px; height: 32px; border-radius: 16px; background: #002145; color: #fff; font: 700 18px/32px Lato, sans-serif; text-align: center; }
.questions { flex: 0 1 1240px; padding-top: 24px; }
.row { display: flex; align-items: flex-start; gap: 15px; margin-bottom: 67px; }
.flag { width: 32px; height: 26px; margin-top: 22px; }
.card { flex: 1; border: 1px solid #aaa; }
.card-head { display: flex; align-items: center; justify-content: space-between; height: 73px; padding: 0 32px; background: #f5f5f5; border-bottom: 1px solid #aaa; }
.card-head h2 { font-size: 31px; line-height: 40px; }
.card-head span { font-size: 28px; font-weight: 700; color: #595959; }
.card-body { padding: 48px 32px 33px; font-size: 26px; line-height: 36px; }
.answers { margin-top: 39px; font-size: 22px; }
.answers label { display: flex; align-items: center; height: 60px; padding-bottom: 4px; border-top: 1px solid #ddd; }
.answers input { width: 20px; height: 20px; margin: 4px 12px 0 8px; accent-color: #0075ff; }
.card-body.text { padding: 49px 32px 89px; }
.text p { margin-bottom: 21px; }
.relations { display: flex; gap: 39px; padding: 14px 0 0 21px; color: #000; }
.relations table { border-collapse: collapse; table-layout: fixed; border: 4px solid #000; border-width: 5px 4px; }
.rel-r { width: 463px; }
.rel-s { width: 582px; }
.relations caption { font: 700 39px/42px "Liberation Serif", serif; text-align: left; padding-left: 110px; }
.rel-s caption { padding-left: 43px; }
.relations u { text-decoration-thickness: 3px; text-underline-offset: 4px; }
.relations th, .relations td { border: 2px solid #000; padding: 0; text-align: center; height: 48px; font: 38px/40px "Liberation Mono", monospace; color: #333; }
.relations th { height: 53px; border-bottom-width: 5px; font: italic 39px/40px "Liberation Serif", serif; color: #000; }

.dock { position: absolute; left: 50%; bottom: 10px; transform: translateX(-50%); display: flex; align-items: flex-start; gap: 20px; height: 102px; padding: 15px 14px 0; border-radius: 32px; border: 2px solid #ffffff30; background: linear-gradient(90deg, #e0d6d4, #e6dcd6 10%, #e3dad0 22%, #d2dcd5 30%, #e0d6ca 36%, #d3c2bd 43%, #c3afb3 48%, #aeb3a4 57%, #b1a8a5 66%, #b8adab 80%, #a79d9b 87%, #7b7777 92%, #737070); box-shadow: 0 0 110px #00000059; }
.app { position: relative; width: 64px; height: 86px; }
.app > svg { width: 64px; height: 64px; filter: drop-shadow(0 1px 1px #0005); }
.app.tv svg svg { width: 20px; height: 27px; }
.app.running::after { content: ""; position: absolute; left: 28px; bottom: 4px; width: 8px; height: 8px; border-radius: 50%; background: #3f3836; }
.count { position: absolute; right: -10px; top: -8px; min-width: 30px; height: 30px; padding: 0 4px; border-radius: 15px; background: #fb4a40; color: #fff; font: 20px/30px Roboto, sans-serif; text-align: center; }
.sep { width: 2px; height: 74px; margin: 0 8px; background: #00000050; }
.app.clock { width: 76px; margin: 0 -6px; }
.app.clock > svg { width: 76px; height: 72px; margin-top: -3px; }
.app.thumb { width: 76px; }
.app.thumb > svg { width: 76px; }
.app.thumb svg svg { width: 26px; height: 26px; }
.app.trash { width: 58px; margin-left: -4px; }
.app.trash > svg { width: 58px; height: 74px; margin-top: -6px; }
```
